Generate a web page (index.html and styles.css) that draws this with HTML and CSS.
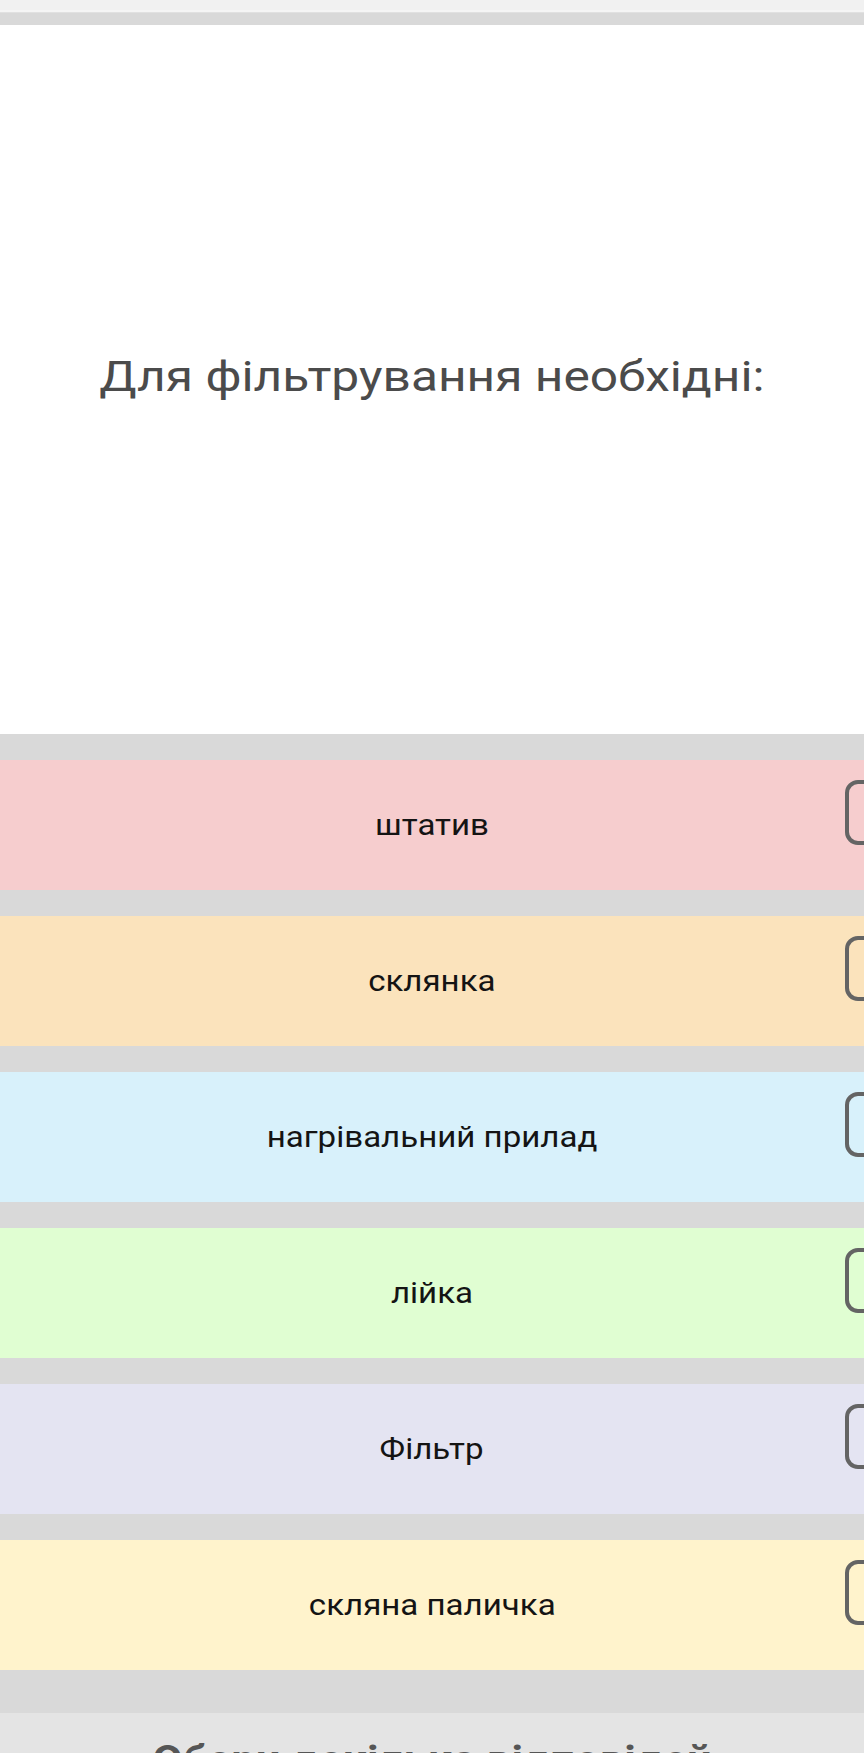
FILE: index.html
```html
<!DOCTYPE html>
<html lang="uk">
<head>
<meta charset="utf-8">
<title>Тест</title>
<link rel="stylesheet" href="styles.css">
</head>
<body>
<div class="topbar"></div>
<div class="topline"></div>
<main class="quiz">
  <section class="question">
    <h1 class="question-text">Для фільтрування необхідні:</h1>
  </section>
  <ul class="options">
    <li class="option opt-pink"><span class="option-text">штатив</span><span class="check"></span></li>
    <li class="option opt-peach"><span class="option-text">склянка</span><span class="check"></span></li>
    <li class="option opt-blue"><span class="option-text">нагрівальний прилад</span><span class="check"></span></li>
    <li class="option opt-green"><span class="option-text">лійка</span><span class="check"></span></li>
    <li class="option opt-lavender"><span class="option-text">Фільтр</span><span class="check"></span></li>
    <li class="option opt-yellow"><span class="option-text">скляна паличка</span><span class="check"></span></li>
  </ul>
</main>
<footer class="hint">
  <p class="hint-text">Обери декілька відповідей</p>
</footer>
</body>
</html>
```

FILE: styles.css
```css
html, body {
  margin: 0;
  padding: 0;
}
body {
  background: #d9d9d9;
  font-family: Roboto, "Noto Sans", "Liberation Sans", sans-serif;
  overflow-x: hidden;
}
.topbar {
  height: 10px;
  background: #f1f1f1;
}
.topline {
  height: 3px;
  background: linear-gradient(#f5f5f5 0 55%, #e1e1e1 55% 100%);
}
.quiz {
  padding-top: 12px;
}
.question {
  height: 709px;
  background: #ffffff;
  display: flex;
  align-items: center;
  justify-content: center;
  box-sizing: border-box;
  padding-bottom: 8px;
}
.question-text {
  margin: 0;
  font-weight: 400;
  font-size: 43px;
  color: #4b4b4b;
  text-align: center;
  white-space: nowrap;
  transform: scaleX(1.155);
}
.options {
  list-style: none;
  margin: 0;
  padding: 26px 0 43px;
  display: flex;
  flex-direction: column;
  gap: 26px;
}
.option {
  position: relative;
  height: 130px;
  display: flex;
  align-items: center;
  justify-content: center;
  overflow: hidden;
}
.option-text {
  font-size: 29px;
  color: #141414;
  white-space: nowrap;
  transform: scaleX(1.14);
}
.check {
  position: absolute;
  top: 20px;
  left: calc(100% - 19px);
  width: 65px;
  height: 65px;
  box-sizing: border-box;
  border: 4.5px solid #646464;
  border-radius: 13px;
}
.opt-pink { background: #f6cdce; }
.opt-peach { background: #fbe3bc; }
.opt-blue { background: #d8f1fb; }
.opt-green { background: #e0fed2; }
.opt-lavender { background: #e4e4f2; }
.opt-yellow { background: #fff3cc; }
.hint {
  background: #e4e4e4;
  padding: 25px 0 40px;
  display: flex;
  justify-content: center;
  overflow: hidden;
}
.hint-text {
  margin: 0;
  font-size: 38px;
  font-weight: 700;
  color: #565656;
  white-space: nowrap;
  transform: scaleX(1.15);
}
```
